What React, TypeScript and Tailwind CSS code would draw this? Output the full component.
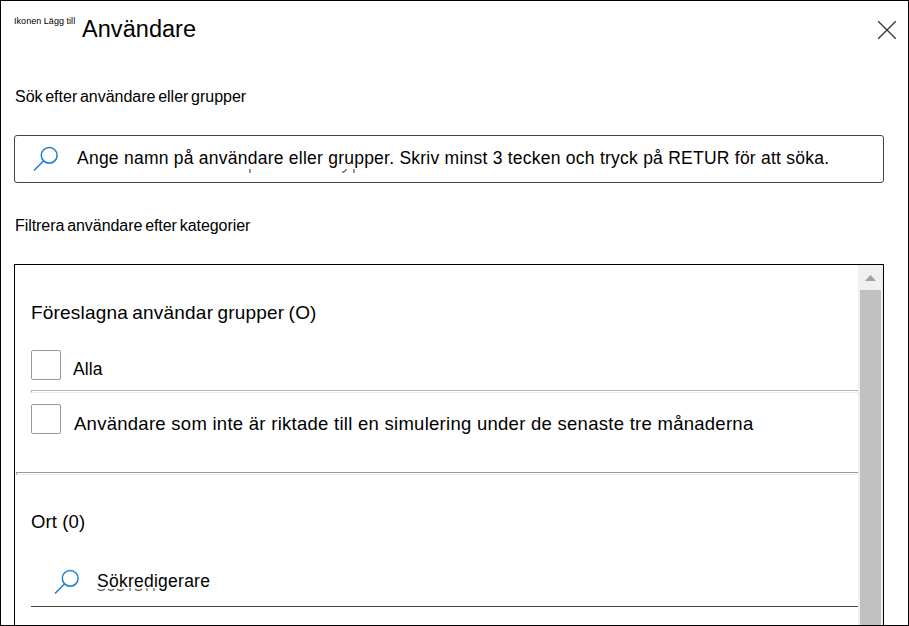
const SearchIcon = () => (
  <svg className="block h-[26px] w-[26px] shrink-0" viewBox="0 0 26 26" fill="none" stroke="#1a7fd4" strokeWidth="1.5">
    <circle cx="16.2" cy="9.3" r="7.9" />
    <path d="M10.7 14.8 1 24.5" />
  </svg>
);

const Checkbox = () => (
  <span className="block h-[30px] w-[30px] shrink-0 rounded-[2px] border border-[#999999] bg-white" />
);

const Divider = ({ className }: { className: string }) => (
  <div className={`h-[3px] border-t border-b border-l border-b-[#eeeeee] ${className}`} />
);

export default function App() {
  return (
    <div
      className="flex h-[626px] w-[909px] flex-col overflow-hidden border border-black bg-white pl-[13px] text-black"
      style={{ fontFamily: '"Liberation Sans", Arial, sans-serif' }}
    >
      <header className="flex h-[84px] shrink-0 items-start">
        <span className="mt-[14px] w-[68px] whitespace-nowrap text-[9px] leading-[12px] tracking-[0.04px]">Ikonen Lägg till</span>
        <h1 className="mt-[14px] whitespace-nowrap text-[23.5px] leading-[28px] tracking-[0.05px]">Användare</h1>
        <svg className="mt-[19px] mr-[11px] ml-auto h-5 w-5" viewBox="0 0 20 20" stroke="#333333" strokeWidth="1.3">
          <path d="M1.2 1.2 18.8 18.8M18.8 1.2 1.2 18.8" />
        </svg>
      </header>

      <p className="h-[50px] shrink-0 whitespace-nowrap pl-px text-[16px] leading-[23px] [word-spacing:-1.8px]">
        Sök efter användare eller grupper
      </p>

      <div className="relative flex h-12 w-[870px] shrink-0 items-center rounded-[3px] border border-[#444444] pl-[18px]">
        <SearchIcon />
        <span className="-mt-[2px] ml-[18px] whitespace-nowrap text-[17.5px] leading-6 tracking-[0.24px]">
          Ange namn på användare eller grupper. Skriv minst 3 tecken och tryck på RETUR för att söka.
        </span>
        <svg className="absolute top-[33px] left-[233px] h-[4px] w-[116px]" viewBox="0 0 116 4" fill="none" stroke="#777777" strokeWidth="1.5">
          <path d="M2 0V4M94 3.2Q97 3.4 98.5 0M106 0V4" />
        </svg>
      </div>

      <p className="h-[81px] shrink-0 whitespace-nowrap pt-[31px] pl-px text-[16px] leading-[23px] tracking-[-0.06px] [word-spacing:-1.5px]">
        Filtrera användare efter kategorier
      </p>

      <div className="flex h-[361px] w-[870px] shrink-0 border-x border-t border-black">
        <div className="flex w-[843px] flex-col">
          <h2 className="h-[85px] whitespace-nowrap pt-[35px] pl-[16px] text-[19px] leading-[25px] tracking-[0.2px] [word-spacing:-1.2px]">
            Föreslagna användar grupper (O)
          </h2>
          <div className="flex h-[40px] pl-[16px]">
            <Checkbox />
            <span className="mt-[7px] ml-[12px] text-[17.5px] leading-6 tracking-[0.1px]">Alla</span>
          </div>
          <Divider className="ml-[16px] border-t-[#b4b4b4] border-l-[#b4b4b4]" />
          <div className="flex h-[79px] pt-[11px] pl-[16px]">
            <Checkbox />
            <span className="mt-[8px] ml-[13px] whitespace-nowrap text-[18.5px] leading-6 tracking-[0.27px]">
              Användare som inte är riktade till en simulering under de senaste tre månaderna
            </span>
          </div>
          <Divider className="ml-px border-t-[#999999] border-l-[#999999]" />
          <h2 className="h-[93px] whitespace-nowrap pt-[34px] pl-[16px] text-[18.5px] leading-[25px] tracking-[0.1px]">Ort (0)</h2>
          <div className="relative ml-[16px] flex h-[39px] border-b border-[#444444] pt-px pl-[23px]">
            <SearchIcon />
            <span className="ml-[17px] text-[17.5px] leading-6 tracking-[0.25px]">Sökredigerare</span>
            <svg className="absolute top-[20px] left-[66px] h-[4px] w-[64px]" viewBox="0 0 64 4" fill="none" stroke="#666666" strokeWidth="1.3">
              <path d="M0.5 1Q4 4 8 1M11 1Q14 4 17 1M20 1Q23 4 27 1M33 0V3M38 1Q41 4 45 1M50 0V3M57 0V3" />
            </svg>
          </div>
        </div>
        <div className="flex w-[25px] flex-col items-center bg-[#f0f0f0]">
          <svg className="h-[25px] w-[25px] shrink-0" viewBox="0 0 25 25" fill="#a0a0a0">
            <path d="M7 16 12.5 10 18 16Z" />
          </svg>
          <div className="w-[21px] grow bg-[#c1c1c1]" />
        </div>
      </div>
    </div>
  );
}
